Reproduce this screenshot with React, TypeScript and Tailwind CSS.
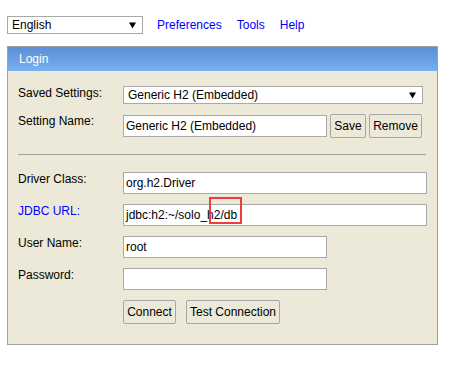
import React from "react";

const font = "font-['Liberation_Sans',Arial,sans-serif]";

function Arrow() {
    return (
        <svg width="7" height="7" viewBox="0 0 7 7" className="shrink-0">
            <polygon points="0,0.5 7,0.5 3.5,6.5" fill="#000" />
        </svg>
    );
}

function FakeSelect({ value, className }: { value: string; className: string }) {
    return (
        <div className={`flex items-center justify-between border border-[#a9a9a9] bg-white pl-[4px] pr-[6px] ${className}`}>
            <span className="leading-[14px]">{value}</span>
            <Arrow />
        </div>
    );
}

function Field({ value, className }: { value: string; className: string }) {
    return (
        <div className={`flex h-[22px] items-center border border-[#a9a9a9] bg-white pl-[2px] ${className}`}>
            <span className="leading-[14px] whitespace-pre">{value}</span>
        </div>
    );
}

function Btn({ children, className = "" }: { children: React.ReactNode; className?: string }) {
    return (
        <button className={`flex h-[24px] items-center justify-center whitespace-nowrap rounded-[2px] border border-[#a7a7a7] bg-[#ece9d8] px-[2px] leading-[14px] text-black ${className}`}>
            {children}
        </button>
    );
}

function Row({ label, blue = false, children, className = "" }: { label: string; blue?: boolean; children: React.ReactNode; className?: string }) {
    return (
        <div className={`flex items-start ${className}`}>
            <div className={`w-[105px] shrink-0 leading-[14px] ${blue ? "text-[#0000ff]" : "text-black"}`}>{label}</div>
            {children}
        </div>
    );
}

export default function App() {
    return (
        <div className={`min-h-[372px] w-[450px] bg-white text-[12px] text-black ${font}`}>
            {/* Top bar */}
            <div className="flex items-center pl-[7px] pt-[16px]">
                <FakeSelect value="English" className="h-[18px] w-[136px]" />
                <div className="ml-[14px] flex gap-[15px] leading-[14px] text-[#0000ff]">
                    <a>Preferences</a>
                    <a>Tools</a>
                    <a>Help</a>
                </div>
            </div>

            {/* Login panel */}
            <div className="ml-[7px] mt-[12px] w-[431px] border border-[#a0a0a0] bg-[#ece9d8]">
                <div className="flex h-[24px] items-center bg-gradient-to-b from-[#5a8dd6] to-[#7ab1f0] pl-[11px] leading-[14px] text-white">
                    Login
                </div>

                <div className="pb-[20px] pl-[10px] pt-[15px]">
                    <Row label="Saved Settings:">
                        <FakeSelect value="Generic H2 (Embedded)" className="h-[18px] w-[300px]" />
                    </Row>

                    <Row label="Setting Name:" className="mt-[10px]">
                        <Field value="Generic H2 (Embedded)" className="mt-[1px] w-[204px]" />
                        <Btn className="ml-[3px] w-[36px]">Save</Btn>
                        <Btn className="ml-[3px] w-[53px]">Remove</Btn>
                    </Row>

                    <div className="mr-[11px] mt-[16px] h-[1px] bg-[#a0a0a0]" />

                    <Row label="Driver Class:" className="mt-[17px]">
                        <Field value="org.h2.Driver" className="w-[304px]" />
                    </Row>

                    <Row label="JDBC URL:" blue className="mt-[10px]">
                        <div className="relative">
                            <Field value="jdbc:h2:~/solo_h2/db" className="w-[304px]" />
                            <div className="absolute left-[86px] top-[-7px] h-[27px] w-[33px] border-2 border-[#f03c3c]" />
                        </div>
                    </Row>

                    <Row label="User Name:" className="mt-[10px]">
                        <Field value="root" className="w-[204px]" />
                    </Row>

                    <Row label="Password:" className="mt-[10px]">
                        <Field value="" className="w-[204px]" />
                    </Row>

                    <div className="ml-[105px] mt-[10px] flex gap-[10px]">
                        <Btn className="w-[53px]">Connect</Btn>
                        <Btn className="w-[94px]">Test Connection</Btn>
                    </div>
                </div>
            </div>
        </div>
    );
}
